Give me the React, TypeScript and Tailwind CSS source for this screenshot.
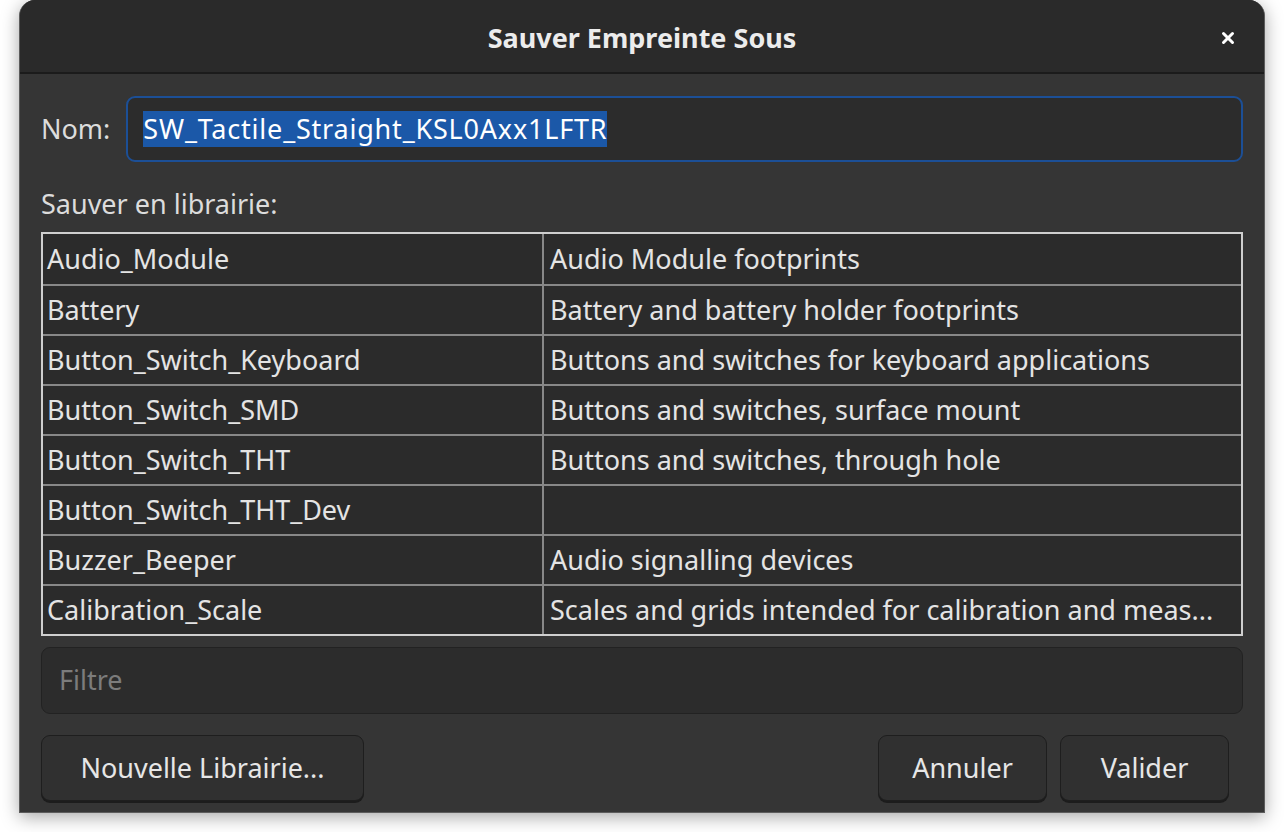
import { X } from 'lucide-react'

const ROWS: [string, string][] = [
  ['Audio_Module', 'Audio Module footprints'],
  ['Battery', 'Battery and battery holder footprints'],
  ['Button_Switch_Keyboard', 'Buttons and switches for keyboard applications'],
  ['Button_Switch_SMD', 'Buttons and switches, surface mount'],
  ['Button_Switch_THT', 'Buttons and switches, through hole'],
  ['Button_Switch_THT_Dev', ''],
  ['Buzzer_Beeper', 'Audio signalling devices'],
  ['Calibration_Scale', 'Scales and grids intended for calibration and meas...'],
]

function Btn({ label, w }: { label: string; w: string }) {
  return (
    <button
      className={`${w} h-[66px] rounded-[9px] bg-[#303030] border border-[#1e1e1e] shadow-[0_2px_0_#1c1c1c] text-[27px] text-[#e6e6e6]`}
    >
      {label}
    </button>
  )
}

export default function App() {
  return (
    <div
      className="w-[1284px] h-[832px] bg-white pl-[19px] overflow-hidden"
      style={{ fontFamily: '"Noto Sans", "Open Sans", sans-serif' }}
    >
      <div className="w-[1246px] h-[813px] flex flex-col rounded-t-[16px] bg-[#353535] border border-[#5c5c5c] border-t-0 shadow-[0_4px_18px_rgba(0,0,0,0.35)] overflow-hidden">
        {/* title bar */}
        <header className="h-[74px] shrink-0 flex items-center justify-center relative pt-[5px] bg-[#2a2a2a] border-b-2 border-[#1b1b1b]">
          <h1 className="font-bold text-[27px] text-[#ececec]">Sauver Empreinte Sous</h1>
          <X className="absolute right-[27px] top-[29px] text-white" size={18} strokeWidth={4} />
        </header>

        <div className="flex-1 flex flex-col px-[21px] pt-[22px]">
          <div className="flex items-center gap-[16px]">
            <span className="text-[27px] text-[#dcdcdc]">Nom:</span>
            <div className="flex-1 h-[66px] rounded-[9px] border-2 border-[#1c4f96] bg-[#2c2c2c] flex items-center px-[15px]">
              <span className="text-[27px] leading-[36px] tracking-[0.8px] bg-[#1b58a8] text-white">SW_Tactile_Straight_KSL0Axx1LFTR</span>
            </div>
          </div>

          <div className="mt-[24px] text-[27px] leading-[36px] text-[#dcdcdc]">Sauver en librairie:</div>

          <div className="mt-[10px] border-2 border-[#cfcfcf] bg-[#2b2b2b]">
            {ROWS.map(([name, desc], i) => (
              <div
                key={name}
                className={`flex h-[50px] ${i > 0 ? 'border-t-2 border-[#888888]' : ''}`}
              >
                <div className="w-[501px] shrink-0 border-r-2 border-[#888888] px-[4px] flex items-center text-[27px] text-[#e4e4e4]">
                  {name}
                </div>
                <div className="flex-1 px-[6px] flex items-center text-[27px] text-[#e4e4e4] whitespace-nowrap overflow-hidden">
                  {desc}
                </div>
              </div>
            ))}
          </div>

          <div className="mt-[11px] h-[67px] rounded-[9px] bg-[#2c2c2c] border border-[#222222] flex items-center px-[17px] text-[27px] text-[#7c7c7c]">
            Filtre
          </div>

          <div className="mt-[21px] flex items-center">
            <Btn label="Nouvelle Librairie..." w="w-[323px]" />
            <div className="flex-1" />
            <Btn label="Annuler" w="w-[169px]" />
            <div className="w-[13px]" />
            <Btn label="Valider" w="w-[169px]" />
            <div className="w-[14px]" />
          </div>
        </div>
      </div>
    </div>
  )
}
